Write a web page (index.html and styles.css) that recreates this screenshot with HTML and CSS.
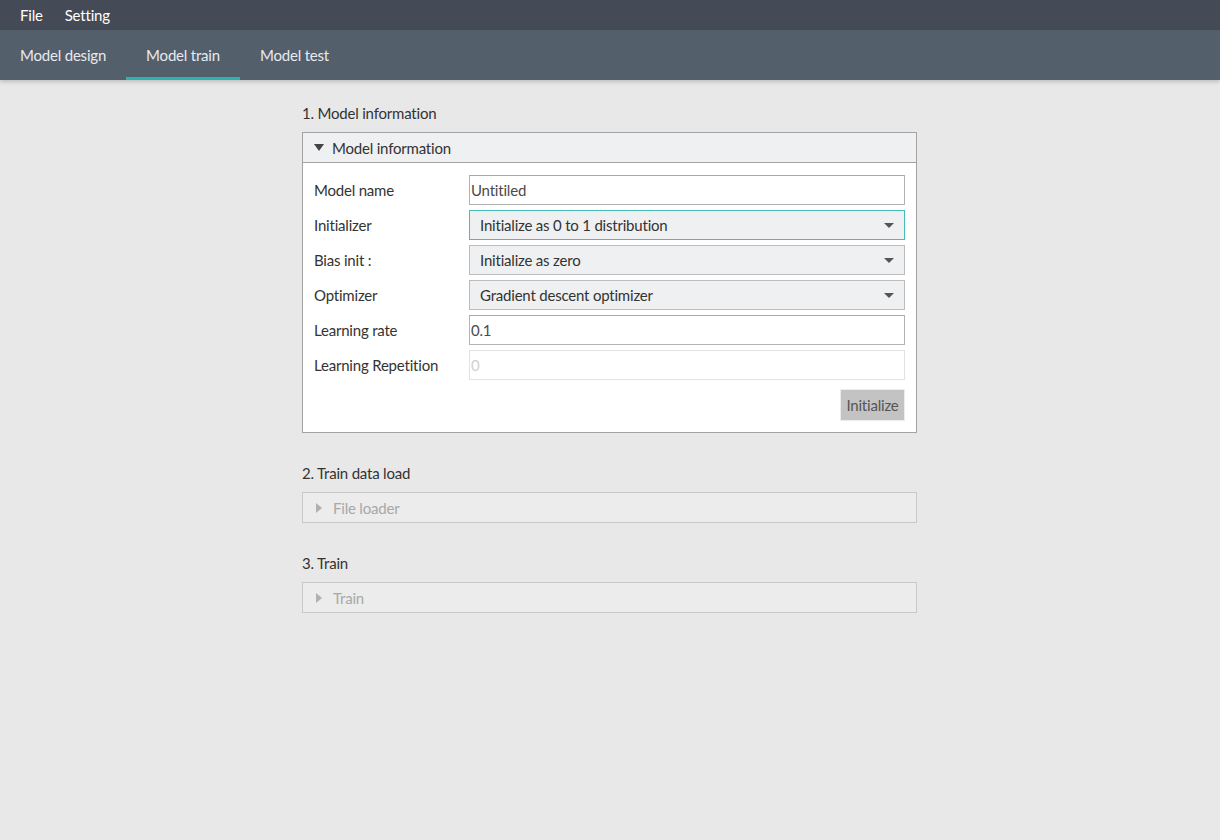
FILE: index.html
```html
<!DOCTYPE html>
<html>
<head>
<meta charset="utf-8">
<link rel="stylesheet" href="styles.css">
</head>
<body>
<div class="menubar">
  <span class="menu-item">File</span>
  <span class="menu-item">Setting</span>
</div>
<div class="tabbar">
  <div class="tab">Model design</div>
  <div class="tab active">Model train</div>
  <div class="tab">Model test</div>
</div>
<main class="content">
  <section class="section">
    <h2 class="section-title">1. Model information</h2>
    <div class="panel open">
      <div class="panel-header"><span class="arrow-down"></span>Model information</div>
      <div class="panel-body">
        <div class="row"><label class="label">Model name</label><div class="input">Untitiled</div></div>
        <div class="row"><label class="label">Initializer</label><div class="select focused"><span>Initialize as 0 to 1 distribution</span><span class="caret"></span></div></div>
        <div class="row"><label class="label">Bias init :</label><div class="select"><span>Initialize as zero</span><span class="caret"></span></div></div>
        <div class="row"><label class="label">Optimizer</label><div class="select"><span>Gradient descent optimizer</span><span class="caret"></span></div></div>
        <div class="row"><label class="label">Learning rate</label><div class="input">0.1</div></div>
        <div class="row"><label class="label">Learning Repetition</label><div class="input disabled">0</div></div>
        <div class="actions"><button class="btn">Initialize</button></div>
      </div>
    </div>
  </section>
  <section class="section">
    <h2 class="section-title">2. Train data load</h2>
    <div class="panel closed">
      <div class="panel-header"><span class="arrow-right"></span>File loader</div>
    </div>
  </section>
  <section class="section">
    <h2 class="section-title">3. Train</h2>
    <div class="panel closed">
      <div class="panel-header"><span class="arrow-right"></span>Train</div>
    </div>
  </section>
</main>
</body>
</html>
```
FILE: styles.css
```css
html, body {
  margin: 0;
  padding: 0;
  height: 100%;
}
body {
  background: #e8e8e8;
  font-family: "Lato", "Noto Sans", sans-serif;
  font-size: 15px;
  letter-spacing: -0.2px;
  color: #333;
  overflow: hidden;
}
.menubar {
  height: 30px;
  background: #454b56;
  display: flex;
  align-items: center;
  padding-left: 20px;
  gap: 22px;
  color: #fff;
}
.menu-item {
  line-height: 30px;
}
.tabbar {
  height: 50px;
  background: #545f6c;
  display: flex;
  box-shadow: 0 2px 4px rgba(0,0,0,0.18);
  position: relative;
}
.tab {
  padding: 0 20px;
  line-height: 50px;
  color: #e8eaec;
  box-sizing: border-box;
}
.tab.active {
  border-bottom: 3px solid #2bb3b0;
}
.content {
  width: 615px;
  margin-left: calc(50% - 308px);
  padding-top: 23px;
}
.section {
  margin-bottom: 30px;
}
.section-title {
  font-size: 15px;
  font-weight: normal;
  color: #333;
  margin: 0 0 9px 0;
  line-height: 20px;
}
.panel {
  border: 1px solid #a3a3a3;
  background: #fff;
}
.panel-header {
  height: 29px;
  background: #eff0f1;
  display: flex;
  align-items: center;
  padding-left: 11px;
  color: #333;
}
.panel.open .panel-header {
  border-bottom: 1px solid #a3a3a3;
}
.panel.closed {
  border-color: #c8c8c8;
}
.panel.closed .panel-header {
  background: #ebeceb;
  color: #a8a8a8;
}
.arrow-down {
  width: 0;
  height: 0;
  border-left: 5px solid transparent;
  border-right: 5px solid transparent;
  border-top: 7px solid #444;
  margin-right: 8px;
}
.arrow-right {
  width: 0;
  height: 0;
  border-top: 5px solid transparent;
  border-bottom: 5px solid transparent;
  border-left: 6px solid #b0b0b0;
  margin-left: 2px;
  margin-right: 11px;
}
.panel-body {
  padding: 12px 11px 11px 11px;
  display: flex;
  flex-direction: column;
  gap: 5px;
}
.row {
  display: flex;
  align-items: center;
  height: 30px;
}
.label {
  width: 155px;
  color: #333;
}
.input, .select {
  flex: 1;
  height: 30px;
  box-sizing: border-box;
  display: flex;
  align-items: center;
}
.input {
  border: 1px solid #b3b3b3;
  border-top-color: #a8a8a8;
  padding-left: 1px;
  color: #4a4a4a;
  background: #fff;
}
.input.disabled {
  border-color: #e2e2e2;
  color: #d0d0d0;
}
.select {
  border: 1px solid #bcbcbc;
  background: #eff0f1;
  padding: 0 10px;
  justify-content: space-between;
  color: #333;
}
.select.focused {
  border-color: #47bcbc;
}
.caret {
  width: 0;
  height: 0;
  border-left: 5px solid transparent;
  border-right: 5px solid transparent;
  border-top: 5px solid #555;
}
.actions {
  display: flex;
  justify-content: flex-end;
  margin-top: 4px;
}
.btn {
  font-family: inherit;
  font-size: 15px;
  letter-spacing: -0.2px;
  background: #c3c3c3;
  color: #555;
  border: 1px solid #ececec;
  height: 32px;
  min-width: 65px;
  padding: 0 4px;
}
```
